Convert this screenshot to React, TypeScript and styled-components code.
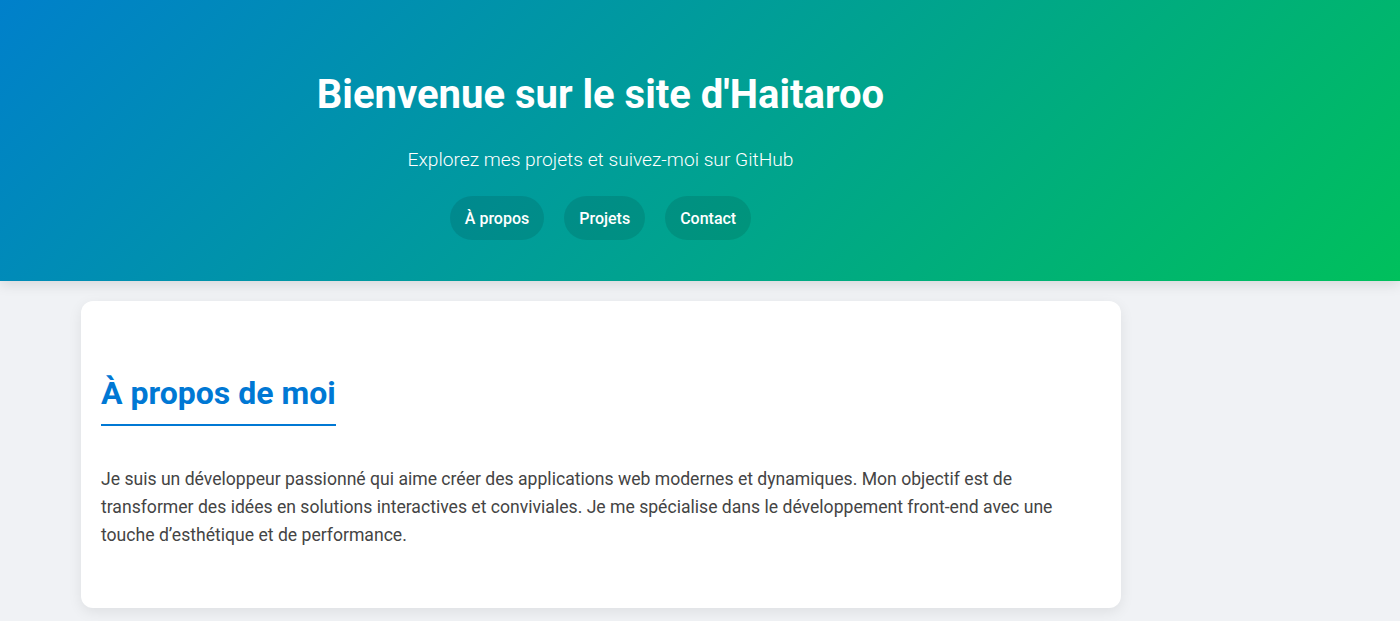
import React from "react";
import styled, { createGlobalStyle } from "styled-components";

const GlobalStyle = createGlobalStyle`
  html, body {
    margin: 0;
    padding: 0;
    background: #f0f2f5;
    font-family: Roboto, "Noto Sans", Arial, sans-serif;
  }
  * { box-sizing: border-box; }
`;

const Header = styled.header`
  width: 100%;
  height: 281px;
  background: linear-gradient(135deg, #0080cb 0%, #00c05c 100%);
  box-shadow: 0 4px 12px rgba(0, 0, 0, 0.1);
  position: relative;
  z-index: 1;
`;

const HeaderInner = styled.div`
  width: 1201px;
  padding-top: 71px;
  display: flex;
  flex-direction: column;
  align-items: center;
  color: #fff;
`;

const Title = styled.h1`
  margin: 0;
  font-size: 40px;
  font-weight: 700;
  line-height: 47px;
`;

const Subtitle = styled.p`
  margin: 31px 0 0;
  font-size: 19.2px;
  font-weight: 300;
  line-height: 22px;
`;

const Nav = styled.nav`
  margin-top: 25px;
  display: flex;
  gap: 20px;
`;

const NavButton = styled.a`
  display: inline-flex;
  align-items: center;
  height: 44px;
  padding: 0 15px;
  border-radius: 22px;
  background: rgba(0, 0, 0, 0.1);
  color: #fff;
  font-size: 16px;
  font-weight: 500;
  text-decoration: none;
`;

const Main = styled.main`
  width: 1202px;
  padding: 20px 81px;
`;

const Card = styled.section`
  background: #fff;
  border-radius: 12px;
  box-shadow: 0 4px 14px rgba(0, 0, 0, 0.08);
  padding: 74px 20px 59px;
`;

const Heading = styled.h2`
  display: inline-block;
  margin: 0;
  font-size: 32px;
  font-weight: 700;
  line-height: 37px;
  color: #0078d4;
  padding-bottom: 12px;
  border-bottom: 2px solid #0078d4;
`;

const Paragraph = styled.p`
  margin: 39px 0 0;
  font-size: 17.6px;
  line-height: 28px;
  color: #444;
`;

export default function App() {
  return (
    <>
      <GlobalStyle />
      <Header>
        <HeaderInner>
          <Title>Bienvenue sur le site d'Haitaroo</Title>
          <Subtitle>Explorez mes projets et suivez-moi sur GitHub</Subtitle>
          <Nav>
            <NavButton href="#apropos">À propos</NavButton>
            <NavButton href="#projets">Projets</NavButton>
            <NavButton href="#contact">Contact</NavButton>
          </Nav>
        </HeaderInner>
      </Header>
      <Main>
        <Card id="apropos">
          <Heading>À propos de moi</Heading>
          <Paragraph>
            Je suis un développeur passionné qui aime créer des applications web modernes et dynamiques. Mon objectif est de
            transformer des idées en solutions interactives et conviviales. Je me spécialise dans le développement front-end
            avec une touche d’esthétique et de performance.
          </Paragraph>
        </Card>
      </Main>
    </>
  );
}
